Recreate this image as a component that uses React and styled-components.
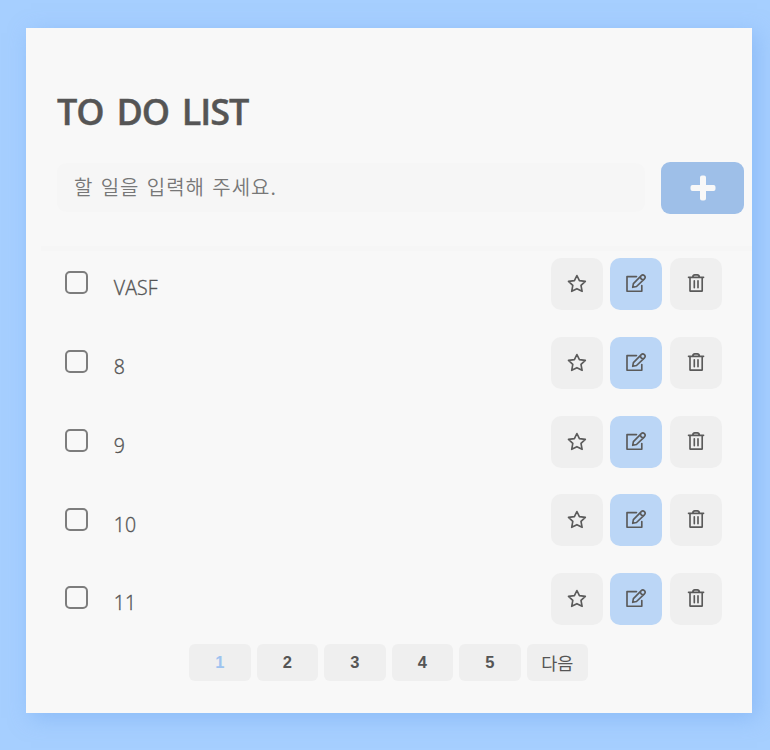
import React from "react";
import styled, { createGlobalStyle } from "styled-components";

const GlobalStyle = createGlobalStyle`
  * { box-sizing: border-box; }
  body {
    margin: 0;
    background: #a6cfff;
    color: #555;
    font-family: "Open Sans", "Noto Sans CJK KR", sans-serif;
  }
  button, input { font-family: inherit; border: 0; margin: 0; padding: 0; }
`;

const Page = styled.main`
  height: 750px;
  padding: 27.5px 18px 37.5px 26px;
  overflow: hidden;
`;

const Card = styled.section`
  display: flex;
  flex-direction: column;
  height: 685px;
  background: #f8f8f8;
  box-shadow: 5px 5px 20px rgba(115, 168, 240, 0.5);
`;

const Title = styled.h1`
  margin: 59.5px 0 0 31px;
  height: 50px;
  font-size: 36px;
  font-weight: 650;
  line-height: 50px;
  letter-spacing: -1.05px;
  word-spacing: 4.5px;
  white-space: nowrap;
  -webkit-text-stroke: 0.4px currentColor;
`;

const EntryForm = styled.form`
  display: flex;
  align-items: center;
  gap: 16.5px;
  height: 52px;
  margin: 24.5px 8px 0 31px;
`;

const EntryInput = styled.input`
  width: 587.5px;
  height: 49px;
  padding: 0 17px 2px;
  border-radius: 9px;
  background: #f6f6f6;
  font-family: "Noto Sans CJK KR", sans-serif;
  font-size: 20px;
  font-weight: 350;
  letter-spacing: 0.95px;
  word-spacing: 2px;
  outline: 0;
  &::placeholder { color: #777; opacity: 1; }
`;

const AddButton = styled.button`
  display: grid;
  place-items: center;
  width: 83px;
  height: 52px;
  border-radius: 9px;
  background: #9ebfe8;
  color: #f8f8f8;
`;

const Divider = styled.hr`
  width: 711px;
  height: 5px;
  margin: 32px 0 0 15px;
  border: 0;
  background: #f6f6f6;
`;

const List = styled.ul`
  display: grid;
  grid-template-rows: repeat(5, 52px);
  row-gap: 26.75px;
  margin: 7.5px 30.5px 0 39px;
  padding: 0;
  list-style: none;
`;

const Row = styled.li`
  display: flex;
  align-items: flex-start;
`;

const Check = styled.input.attrs({ type: "checkbox" })`
  appearance: none;
  flex: none;
  width: 23px;
  height: 23px;
  margin-top: 13.4px;
  border: 2px solid #7d7d7d;
  border-radius: 5px;
`;

const TaskText = styled.span`
  flex: 1;
  margin-left: 25.8px;
  padding-top: 16.4px;
  font-size: 19.5px;
  font-weight: 300;
  line-height: 27px;
  letter-spacing: 0.15px;
  -webkit-text-stroke: 0.35px currentColor;
`;

const Actions = styled.div`
  display: flex;
  gap: 7.5px;
`;

const ActionButton = styled.button`
  display: grid;
  place-items: center;
  width: 52px;
  height: 52px;
  border-radius: 10px;
  background: ${({ $edit }) => ($edit ? "#bbd6f6" : "#efefef")};
  color: #5a5a5a;
`;

const Pagination = styled.nav`
  display: flex;
  gap: 6px;
  margin: 19px 0 0 163px;
`;

const PageButton = styled.button`
  width: 61.5px;
  height: 37px;
  border-radius: 6px;
  background: #efefef;
  color: ${({ $active }) => ($active ? "#9ec3ef" : "#555")};
  font-family: "Liberation Sans", "Noto Sans CJK KR", sans-serif;
  font-size: ${({ $word }) => ($word ? "17.5px" : "16.5px")};
  font-weight: ${({ $word }) => ($word ? 400 : 700)};
`;

const Icon = styled.svg`
  display: block;
  fill: none;
  stroke: currentColor;
  stroke-width: 1.65;
  stroke-linejoin: round;
  stroke-linecap: round;
`;

const AddIcon = styled(Icon)`
  stroke: none;
  fill: currentColor;
`;

const StarIcon = () => (
  <Icon width="22" height="22" viewBox="0 0 22 22">
    <path d="M10.9 2.5l2.5 5.1 5.9.8-4.3 4 1.1 5.9-5.2-2.6-5.2 2.6 1.1-5.9-4.3-4 5.9-.8z" />
  </Icon>
);

const EditIcon = () => (
  <Icon width="22" height="22" viewBox="0 0 22 22">
    <path d="M11.5 3.6H2v14.6h14.8V12.6" />
    <path d="M7.7 14.3l.7-3.7 7.9-8c2-1.9 5.1 1 3.2 3.2l-8 7.7-3.8.8zM15.5 3.9c-.1 1.6 1 2.7 2.7 2.7" />
  </Icon>
);

const TrashIcon = () => (
  <Icon width="22" height="22" viewBox="0 0 22 22">
    <path d="M3.5 4.3h15.1M7.7 4.1c.3-1.7 1-2.2 2-2.2h2.7c1 0 1.7.5 2 2.2M5 4.6v13.5h12.2V4.6" />
    <path d="M9.3 7.7v7M13 7.7v7" />
  </Icon>
);

const tasks = ["VASF", "8", "9", "10", "11"];
const pages = ["1", "2", "3", "4", "5", "다음"];

export default function App() {
  return (
    <>
      <GlobalStyle />
      <Page>
        <Card>
          <Title>TO DO LIST</Title>
          <EntryForm onSubmit={(e) => e.preventDefault()}>
            <EntryInput placeholder="할 일을 입력해 주세요." />
            <AddButton aria-label="추가">
              <AddIcon width="26" height="26" viewBox="0 0 26 26">
                <path d="M12 .5h2q2 0 2 2V10h7.5q2 0 2 2v2q0 2-2 2H16v7.5q0 2-2 2h-2q-2 0-2-2V16H2.5q-2 0-2-2v-2q0-2 2-2H10V2.5q0-2 2-2z" />
              </AddIcon>
            </AddButton>
          </EntryForm>
          <Divider />
          <List>
            {tasks.map((task) => (
              <Row key={task}>
                <Check aria-label={task} />
                <TaskText>{task}</TaskText>
                <Actions>
                  <ActionButton aria-label="중요"><StarIcon /></ActionButton>
                  <ActionButton $edit aria-label="수정"><EditIcon /></ActionButton>
                  <ActionButton aria-label="삭제"><TrashIcon /></ActionButton>
                </Actions>
              </Row>
            ))}
          </List>
          <Pagination>
            {pages.map((label) => (
              <PageButton key={label} $active={label === "1"} $word={label === "다음"}>
                {label}
              </PageButton>
            ))}
          </Pagination>
        </Card>
      </Page>
    </>
  );
}
